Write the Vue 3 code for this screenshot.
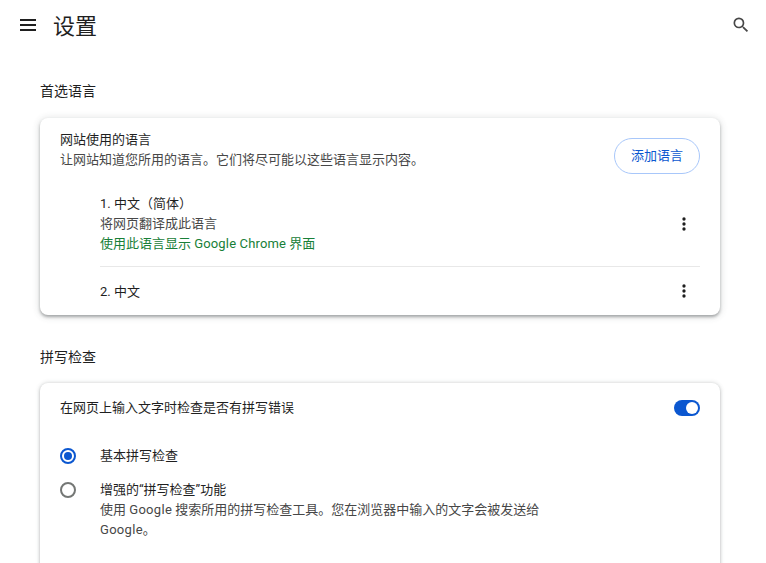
<script setup>
const menuDots = 'M12 8a2 2 0 1 0 0-4 2 2 0 0 0 0 4zm0 2a2 2 0 1 0 0 4 2 2 0 0 0 0-4zm0 6a2 2 0 1 0 0 4 2 2 0 0 0 0-4z'
</script>

<template>
  <div class="page">
    <header class="top">
      <svg class="menu" viewBox="0 0 24 24" width="24" height="24"><path d="M4 18h16v-2H4v2zm0-5h16v-2H4v2zm0-7v2h16V6H4z" /></svg>
      <h1 class="title">设置</h1>
      <svg class="search" viewBox="0 0 24 24" width="20" height="20"><path d="M15.5 14h-.79l-.28-.27A6.471 6.471 0 0 0 16 9.5 6.5 6.5 0 1 0 9.5 16c1.61 0 3.09-.59 4.23-1.57l.27.28v.79l5 4.99L20.49 19l-4.99-5zm-6 0C7.01 14 5 11.99 5 9.5S7.01 5 9.5 5 14 7.01 14 9.5 11.99 14 9.5 14z" /></svg>
    </header>

    <main class="content">
      <h2 class="section first">首选语言</h2>
      <section class="card lang-card">
        <div class="lang-head">
          <div>
            <div class="primary">网站使用的语言</div>
            <div class="secondary">让网站知道您所用的语言。它们将尽可能以这些语言显示内容。</div>
          </div>
          <button class="add">添加语言</button>
        </div>
        <div class="lang-row one">
          <div>
            <div class="primary">1. 中文（简体）</div>
            <div class="secondary">将网页翻译成此语言</div>
            <div class="green">使用此语言显示 <span class="latin-narrow">Google Chrome</span> 界面</div>
          </div>
          <svg class="dots" viewBox="0 0 24 24" width="20" height="20"><path :d="menuDots" /></svg>
        </div>
        <div class="lang-row two">
          <div class="primary nudge">2. 中文</div>
          <svg class="dots" viewBox="0 0 24 24" width="20" height="20"><path :d="menuDots" /></svg>
        </div>
      </section>

      <h2 class="section">拼写检查</h2>
      <section class="card spell-card">
        <div class="spell-head">
          <div class="primary">在网页上输入文字时检查是否有拼写错误</div>
          <span class="toggle"><span class="knob"></span></span>
        </div>
        <div class="radio-row basic">
          <span class="radio on"><span class="dot"></span></span>
          <div class="primary">基本拼写检查</div>
        </div>
        <div class="radio-row enhanced">
          <span class="radio"></span>
          <div class="radio-text">
            <div class="primary">增强的“拼写检查”功能</div>
            <div class="secondary">使用 <span class="latin-wide">Google</span> 搜索所用的拼写检查工具。您在浏览器中输入的文字会被发送给 <span class="latin-wide">Google</span>。</div>
          </div>
        </div>
      </section>
    </main>
  </div>
</template>

<style>
html, body { margin: 0; background: #fff; overflow: hidden; }
</style>

<style scoped>
.page {
  width: 766px;
  height: 563px;
  overflow: hidden;
  background: #fff;
  font-family: Roboto, "Noto Sans CJK SC", sans-serif;
  font-size: 13px;
  line-height: 20px;
  color: #1f1f1f;
}
.top {
  height: 54px;
  display: flex;
  align-items: center;
  padding: 0 15px 0 16px;
}
.menu { fill: #1f1f1f; flex: none; margin-bottom: 4px; }
.title {
  margin: 0 0 0 13px;
  font-size: 22px;
  font-weight: 400;
  line-height: 30px;
  flex: 1;
  color: #1f1f1f;
}
.search { fill: #474747; flex: none; margin-bottom: 4px; }
.content { padding: 0 46px 0 40px; }
.section {
  margin: 0;
  padding: 32px 0 16px;
  font-size: 14px;
  font-weight: 400;
  line-height: 20px;
  color: #1f1f1f;
}
.section.first { padding: 27px 0 17px; }
.card {
  background: #fff;
  border-radius: 8px;
  box-shadow: 0 2px 3px rgba(60, 64, 67, .4), 0 1px 6px 2px rgba(60, 64, 67, .12);
  padding: 0 20px;
}
.spell-card { box-shadow: 0 1px 3px rgba(60, 64, 67, .3), 0 0 4px 1px rgba(60, 64, 67, .12); }
.lang-card { height: 197px; box-sizing: border-box; }
.spell-card { height: 260px; box-sizing: border-box; }
.primary { color: #1f1f1f; }
.secondary { color: #474747; }
.green { color: #188038; }
.latin-narrow { letter-spacing: .15px; }
.latin-wide { letter-spacing: .3px; }
.nudge { margin-top: 2px; }
.lang-head {
  height: 76px;
  padding-top: 12px;
  box-sizing: border-box;
  display: flex;
  align-items: flex-start;
  justify-content: space-between;
}
.add {
  width: 86px;
  height: 36px;
  margin-top: 8px;
  border: 1px solid #a8c7fa;
  border-radius: 18px;
  background: #fff;
  color: #0b57d0;
  font: inherit;
  padding: 0;
}
.lang-row {
  margin-left: 40px;
  display: flex;
  align-items: center;
  justify-content: space-between;
  padding-right: 6px;
}
.lang-row.one { height: 72px; padding-bottom: 12px; box-sizing: border-box; }
.lang-row.two {
  height: 49px;
  border-top: 1px solid #e8e8e8;
  box-sizing: border-box;
}
.dots { fill: #1f1f1f; flex: none; }
.spell-head {
  height: 50px;
  display: flex;
  align-items: center;
  justify-content: space-between;
}
.toggle {
  width: 26px;
  height: 16px;
  border-radius: 8px;
  background: #0b57d0;
  position: relative;
}
.knob {
  position: absolute;
  right: 2px;
  top: 2px;
  width: 12px;
  height: 12px;
  border-radius: 50%;
  background: #fff;
}
.radio-row { display: flex; }
.radio {
  width: 16px;
  height: 16px;
  box-sizing: border-box;
  border: 2px solid #747775;
  border-radius: 50%;
  margin-right: 24px;
  flex: none;
  display: flex;
  align-items: center;
  justify-content: center;
}
.radio.on { border-color: #0b57d0; }
.dot { width: 8px; height: 8px; border-radius: 50%; background: #0b57d0; }
.basic { margin-top: 13px; align-items: center; }
.enhanced { margin-top: 14px; }
.enhanced .radio { margin-top: 2px; }
.radio-text { width: 445px; }
</style>
